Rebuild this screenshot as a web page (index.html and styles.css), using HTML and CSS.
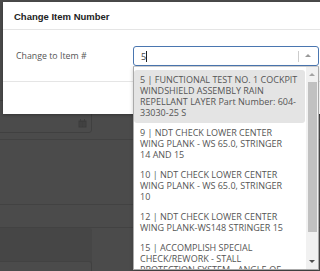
FILE: index.html
```html
<!DOCTYPE html>
<html lang="en">
<head>
    <meta charset="UTF-8">
    <meta name="viewport" content="width=device-width, initial-scale=1.0">
    <title>Change Item Number</title>
    <link rel="stylesheet" href="styles.css">
</head>
<body>
    <!-- page behind the dialog -->
    <div class="page">
        <div class="date-field">
            <svg class="cal-icon" viewBox="0 0 9 9" width="9" height="9">
                <rect x="0.5" y="1.5" width="8" height="7" fill="#3c3c3c"/>
                <rect x="2" y="0" width="1" height="2" fill="#3c3c3c"/>
                <rect x="6" y="0" width="1" height="2" fill="#3c3c3c"/>
                <path d="M1 4h7M1 6h7M3 3v5M6 3v5" stroke="#484848" stroke-width="0.6"/>
            </svg>
        </div>
        <div class="row row-tall"></div>
        <div class="row row-mid"></div>
        <div class="row row-dark"></div>
        <div class="date-field date-field-low"></div>
    </div>

    <!-- Change item dialog -->
    <div class="modal">
        <div class="modal-header">
            <h4>Change Item Number</h4>
        </div>
        <div class="modal-body">
            <label>Change to Item #</label>
            <div class="select-box">
                <span class="select-value">5<span class="caret"></span></span>
                <span class="select-sep"></span>
                <span class="select-arrow"></span>
            </div>
        </div>
        <div class="modal-footer"></div>
    </div>

    <div class="dropdown">
        <ul class="options">
            <li class="active">5 | FUNCTIONAL TEST NO. 1 COCKPIT WINDSHIELD ASSEMBLY RAIN REPELLANT LAYER Part Number: 604-33030-25 S</li>
            <li>9 | NDT CHECK LOWER CENTER<br>WING PLANK - WS 65.0, STRINGER<br>14 AND 15</li>
            <li>10 | NDT CHECK LOWER CENTER<br>WING PLANK - WS 65.0, STRINGER<br>10</li>
            <li>12 | NDT CHECK LOWER CENTER<br>WING PLANK-WS148 STRINGER 15</li>
            <li>15 | ACCOMPLISH SPECIAL<br>CHECK/REWORK - STALL<br>PROTECTION SYSTEM - ANGLE-OF-ATTACK SENSOR</li>
        </ul>
        <div class="scrollbar">
            <span class="scroll-up"></span>
            <div class="scroll-thumb"></div>
            <span class="scroll-down"></span>
        </div>
    </div>
</body>
</html>
```

FILE: styles.css
```css
body {
    margin: 0;
    background-color: #4b4b4b;
    font-family: "Open Sans", Arial, sans-serif;
    overflow: hidden;
    width: 320px;
    height: 271px;
    position: relative;
}
.page {
    padding-top: 100px;
}
.date-field {
    margin-left: -6px;
    width: 98px;
    height: 33px;
    border: 1px solid #404040;
    border-radius: 3px;
    box-sizing: border-box;
    display: flex;
    align-items: flex-end;
    justify-content: flex-end;
    padding: 0 4px 4px 0;
}
.cal-icon {
    display: block;
}
.row {
    border-bottom: 1px solid #424242;
}
.row-tall {
    height: 6px;
}
.row-mid {
    height: 64px;
}
.row-dark {
    height: 22px;
}
.date-field-low {
    border-top-color: #424242;
    height: 40px;
    background-color: #4b4b4b;
    box-shadow: 0 -33px 0 0 #464646;
    margin-top: 33px;
}
.modal {
    position: absolute;
    left: 3px;
    top: 2px;
    width: 330px;
    background-color: #fff;
    box-shadow: 0 1px 3px rgba(0, 0, 0, 0.3);
}
.modal-header {
    height: 27px;
    padding: 0 11px;
    border-bottom: 1px solid #e5e5e5;
    display: flex;
    align-items: center;
}
.modal-header h4 {
    margin: 0;
    font-family: "Liberation Sans", Arial, sans-serif;
    font-size: 9.5px;
    font-weight: bold;
    color: #222;
    padding-top: 1px;
}
.modal-body {
    height: 50px;
    padding-left: 13px;
    border-bottom: 1px solid #e5e5e5;
    display: flex;
    align-items: center;
    gap: 47px;
    padding-top: 1px;
}
.modal-body label {
    font-size: 8.8px;
    color: #555;
    width: 70px;
    white-space: nowrap;
}
.select-box {
    width: 186px;
    height: 20px;
    box-sizing: border-box;
    border: 1px solid #4a76b0;
    border-radius: 3px;
    display: flex;
    align-items: center;
    padding-left: 7px;
}
.select-value {
    flex: 1;
    font-size: 9px;
    color: #444;
    display: flex;
    align-items: center;
}
.caret {
    display: inline-block;
    width: 1px;
    height: 11px;
    background-color: #222;
}
.select-sep {
    width: 1px;
    height: 11px;
    background-color: #ccc;
}
.select-arrow {
    width: 0;
    height: 0;
    border-left: 3px solid transparent;
    border-right: 3px solid transparent;
    border-bottom: 3px solid #999;
    margin: 0 7px 1px 6px;
}
.modal-footer {
    height: 32px;
}
.dropdown {
    position: absolute;
    left: 133px;
    top: 66px;
    width: 186px;
    height: 204px;
    box-sizing: border-box;
    border: 1px solid #aaa;
    border-top-color: #ccc;
    background-color: #fff;
    display: flex;
    overflow: hidden;
    box-shadow: 0 2px 4px rgba(0, 0, 0, 0.2);
}
.options {
    list-style: none;
    margin: 0;
    padding: 3px 0 0 0;
    flex: 1;
}
.options li {
    font-size: 9px;
    line-height: 11px;
    color: #555;
    padding: 4px 6px 5px 6px;
    border-radius: 3px;
}
.options li.active {
    background-color: #e4e4e4;
}
.scrollbar {
    width: 12px;
    margin-left: 1px;
    background-color: #f1f1f1;
    display: flex;
    flex-direction: column;
    align-items: center;
}
.scroll-up,
.scroll-down {
    width: 0;
    height: 0;
    border-left: 3px solid transparent;
    border-right: 3px solid transparent;
}
.scroll-up {
    border-bottom: 3px solid #a3a3a3;
    margin: 6px 0;
}
.scroll-down {
    border-top: 3px solid #505050;
}
.scroll-thumb {
    width: 9px;
    height: 150px;
    background-color: #c1c1c1;
    margin-bottom: 28px;
}
```
